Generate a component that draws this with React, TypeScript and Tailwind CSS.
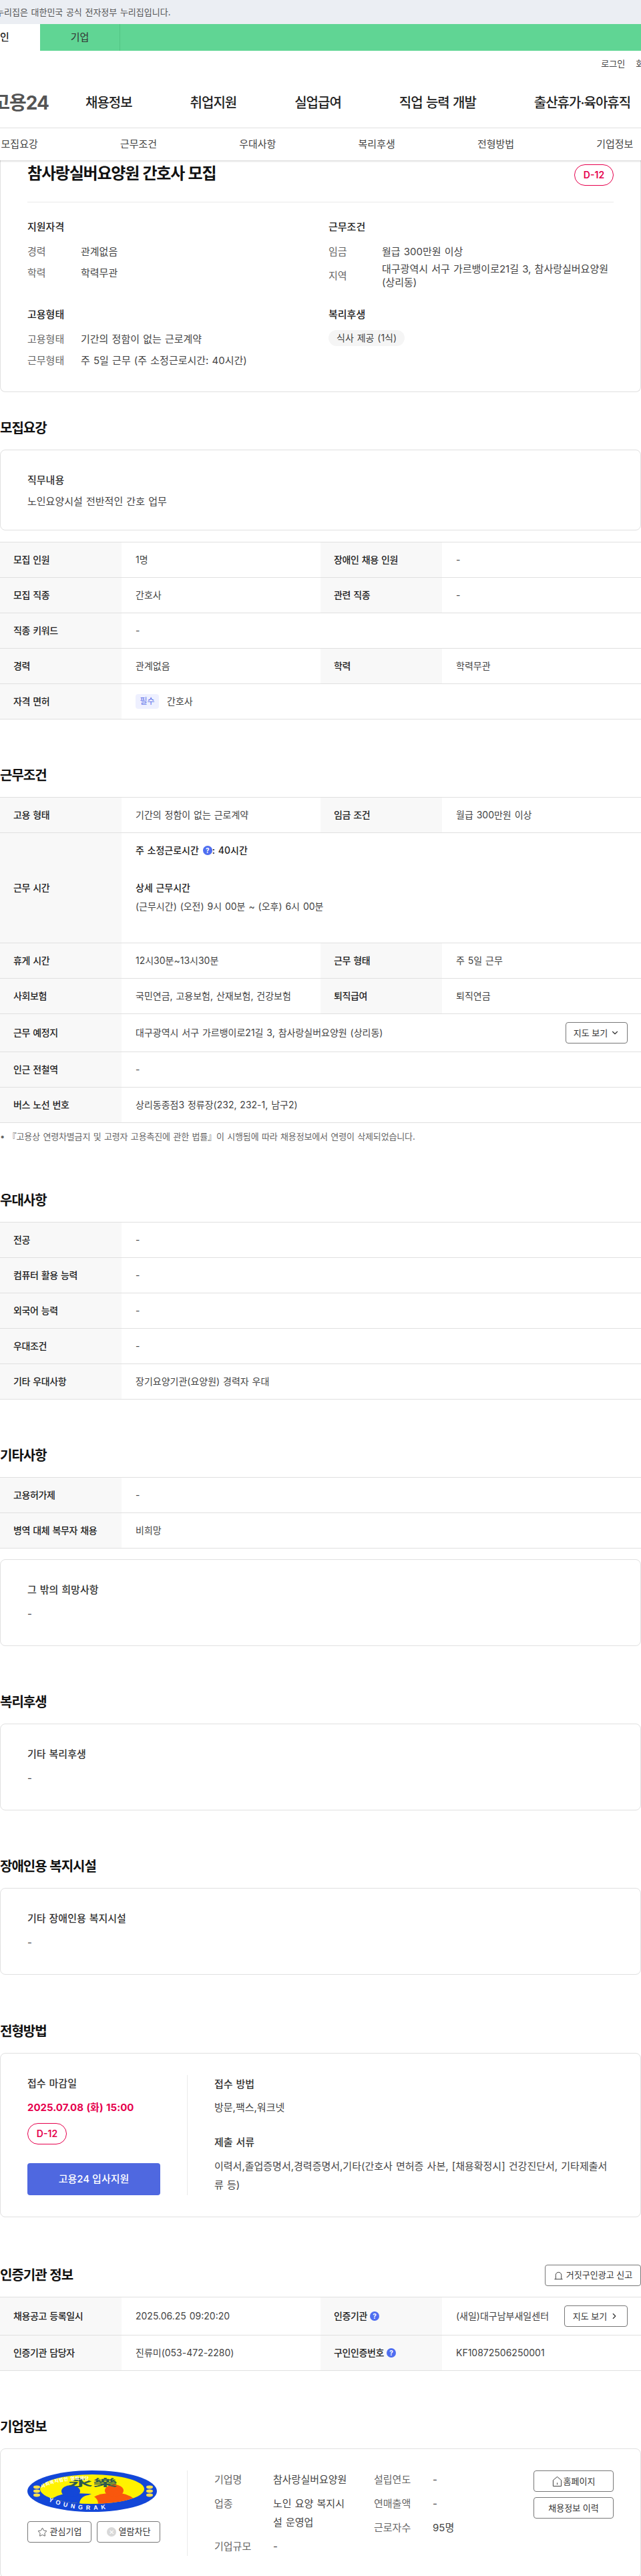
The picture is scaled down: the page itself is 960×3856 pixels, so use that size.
import type { ReactNode } from 'react';
import { ChevronDown, ChevronRight, Star } from 'lucide-react';

const NAV = ['채용정보', '취업지원', '실업급여', '직업 능력 개발', '출산휴가·육아휴직'];
const TABS = ['모집요강', '근무조건', '우대사항', '복리후생', '전형방법', '기업정보'];

function Help() {
  return (
    <span className="inline-flex h-[14px] w-[14px] shrink-0 items-center justify-center rounded-full bg-[#4f6ef0] text-[10px] font-bold leading-none text-white">
      ?
    </span>
  );
}

function Badge() {
  return (
    <span className="flex h-8 w-[59px] shrink-0 items-center justify-center rounded-2xl border border-[#e6004d] bg-white text-sm font-semibold text-[#e6004d]">
      D-12
    </span>
  );
}

function Heading({ children, className = '' }: { children: ReactNode; className?: string }) {
  return (
    <h2 className={`h-[30px] text-[20px] font-bold leading-[30px] tracking-[-1px] text-[#111] ${className}`}>
      {children}
    </h2>
  );
}

function Outline({ children, className = '' }: { children: ReactNode; className?: string }) {
  return (
    <button className={`flex h-8 items-center justify-center rounded border border-[#777] bg-white text-[13px] text-[#333] ${className}`}>
      {children}
    </button>
  );
}

interface RowProps {
  label: ReactNode;
  value: ReactNode;
  label2?: ReactNode;
  value2?: ReactNode;
  height?: string;
}

function Row({ label, value, label2, value2, height = 'h-[53px]' }: RowProps) {
  return (
    <div className={`flex border-b border-[#e0e0e0] ${height}`}>
      <div className="flex w-[182px] shrink-0 items-center gap-1 bg-[#f8f8f8] pl-5 font-medium tracking-[-0.4px] text-[#222]">
        {label}
      </div>
      {label2 ? (
        <>
          <div className="flex w-[298px] shrink-0 items-center pl-[21px] text-[#444]">{value}</div>
          <div className="flex w-[182px] shrink-0 items-center gap-1 bg-[#f8f8f8] pl-5 font-medium tracking-[-0.4px] text-[#222]">
            {label2}
          </div>
          <div className="flex min-w-0 flex-1 items-center pl-[21px] text-[#444]">{value2}</div>
        </>
      ) : (
        <div className="flex min-w-0 flex-1 items-center pl-[21px] text-[#444]">{value}</div>
      )}
    </div>
  );
}

function Table({ children }: { children: ReactNode }) {
  return <div className="border-t border-[#e0e0e0] text-sm">{children}</div>;
}

function TextCard({ title, value, className }: { title: string; value: string; className: string }) {
  return (
    <div className={`rounded-lg border border-[#e0e0e0] px-10 text-[15px] ${className}`}>
      <p className="h-6 font-medium leading-6 text-[#333]">{title}</p>
      <p className="leading-6 text-[#444]">{value}</p>
    </div>
  );
}

function SummaryRow({ label, children, height = 'h-8' }: { label: string; children: ReactNode; height?: string }) {
  return (
    <div className={`flex items-center ${height}`}>
      <span className="w-20 shrink-0 text-[#666]">{label}</span>
      <span className="leading-[20px] text-[#444]">{children}</span>
    </div>
  );
}

function Logo() {
  return (
    <svg viewBox="0 0 199 63" className="h-[63px] w-[199px]">
      <defs>
        <clipPath id="inner">
          <ellipse cx="97" cy="28" rx="78" ry="22" />
        </clipPath>
        <path id="arcTop" d="M22 27 Q60 3 170 24" fill="none" />
        <path id="arcBottom" d="M24 43 Q95 75 172 42" fill="none" />
      </defs>
      <ellipse cx="97" cy="31" rx="97" ry="31" fill="#1347d8" />
      <ellipse cx="97" cy="28" rx="78" ry="22" fill="#fff200" />
      <g clipPath="url(#inner)">
        <path d="M16 52 L39 41 Q50 34 70 34 L96 35 Q80 40 78 56 Z" fill="#1347d8" />
        <path d="M99 40 Q108 34 125 34 L140 34 Q155 36 165 48 L140 56 L107 56 Z" fill="#f9570d" />
        <ellipse cx="92" cy="50" rx="14" ry="13" fill="#fff200" />
      </g>
      <ellipse cx="65" cy="31" rx="14" ry="9" fill="#1347d8" />
      <ellipse cx="130" cy="30" rx="14" ry="9" fill="#f9570d" />
      {[25, 31, 37].map((cy) => (
        <g key={cy} fill="#ffe14d">
          <ellipse cx="14" cy={cy} rx="5" ry="2.4" />
          <ellipse cx="183" cy={cy} rx="5" ry="2.4" />
        </g>
      ))}
      <text x="98" y="23" textAnchor="middle" textLength="74" lengthAdjust="spacingAndGlyphs" fontSize="14" fontWeight="700" fill="#2d5a50">
        永樂
      </text>
      <text fontSize="7" fontWeight="700" fill="#fff" letterSpacing="0.5">
        <textPath href="#arcTop">사회복지법인 영락재단</textPath>
      </text>
      <text fontSize="9" fontWeight="700" fill="#fff" letterSpacing="5" fontFamily="'Liberation Sans', sans-serif">
        <textPath href="#arcBottom" startOffset="8">YOUNGRAK</textPath>
      </text>
    </svg>
  );
}

export default function App() {
  return (
    <div className="w-[960px] overflow-hidden bg-white font-['Inter','Noto_Sans_CJK_KR',sans-serif] text-[#222] [word-spacing:0.06em]">
      <div className="h-9 whitespace-nowrap bg-[#ebeef3] text-[13px] leading-9 text-[#555]">
        <span className="-ml-[6px]">누리집은 대한민국 공식 전자정부 누리집입니다.</span>
      </div>
      <div className="flex h-10 bg-[#60d594] text-[15px] leading-10">
        <div className="-ml-[60px] w-[120px] bg-white text-center font-medium">개인</div>
        <div className="w-[120px] border-r border-[#52c585] text-center text-[#333]">기업</div>
      </div>

      <div className="-mr-[40px] flex h-10 items-center justify-end gap-4 whitespace-nowrap text-[13px] text-[#444]">
        <span>로그인</span>
        <span>회원가입</span>
      </div>
      <div className="flex h-[76px] items-center whitespace-nowrap border-b border-[#eaeaea]">
        <span className="-ml-[60px] w-[188px] shrink-0 pr-[55px] text-right text-[28px] font-bold tracking-[-1px] text-[#555]">
          고용24
        </span>
        <nav className="flex gap-[87px] text-[20px] font-medium tracking-[-1px] text-[#222]">
          {NAV.map((n) => (
            <span key={n}>{n}</span>
          ))}
        </nav>
      </div>

      <div className="relative z-10 -ml-[60px] flex h-[48px] w-[1070px] items-center bg-white text-[15px] text-[#444] shadow-[0_1px_3px_rgba(0,0,0,0.2)]">
        {TABS.map((t) => (
          <span key={t} className="flex-1 text-center">
            {t}
          </span>
        ))}
      </div>

      <section className="rounded-b-lg border border-t-0 border-[#e0e0e0] px-10 pb-[30px] pt-1.5 text-[15px]">
        <div className="flex items-center justify-between border-b border-[#eaeaea] pb-6">
          <h1 className="-mt-1 text-[24px] font-bold tracking-[-1.2px] text-[#111]">참사랑실버요양원 간호사 모집</h1>
          <Badge />
        </div>
        <div className="mt-[25px] grid grid-cols-[451px_1fr] gap-y-[26px]">
          <div>
            <h3 className="mb-[9px] h-6 font-medium leading-6 text-[#222]">지원자격</h3>
            <SummaryRow label="경력">관계없음</SummaryRow>
            <SummaryRow label="학력">학력무관</SummaryRow>
          </div>
          <div>
            <h3 className="mb-[9px] h-6 font-medium leading-6 text-[#222]">근무조건</h3>
            <SummaryRow label="임금">월급 300만원 이상</SummaryRow>
            <SummaryRow label="지역" height="h-10">
              대구광역시 서구 가르뱅이로21길 3, 참사랑실버요양원 (상리동)
            </SummaryRow>
          </div>
          <div>
            <h3 className="mb-[9px] h-6 font-medium leading-6 text-[#222]">고용형태</h3>
            <SummaryRow label="고용형태">기간의 정함이 없는 근로계약</SummaryRow>
            <SummaryRow label="근무형태">주 5일 근무 (주 소정근로시간: 40시간)</SummaryRow>
          </div>
          <div>
            <h3 className="mb-[11px] h-6 font-medium leading-6 text-[#222]">복리후생</h3>
            <span className="inline-block h-6 rounded-full bg-[#f5f5f5] px-3 text-sm leading-6 text-[#444]">
              식사 제공 (1식)
            </span>
          </div>
        </div>
      </section>

      <Heading className="mt-[39px] mb-[17px]">모집요강</Heading>
      <TextCard title="직무내용" value="노인요양시설 전반적인 간호 업무" className="space-y-2 pb-[30px] pt-[33px]" />
      <div className="mt-[17px]">
        <Table>
          <Row label="모집 인원" value="1명" label2="장애인 채용 인원" value2="-" />
          <Row label="모집 직종" value="간호사" label2="관련 직종" value2="-" />
          <Row label="직종 키워드" value="-" />
          <Row label="경력" value="관계없음" label2="학력" value2="학력무관" />
          <Row
            label="자격 면허"
            value={
              <>
                <span className="mr-3 flex h-[22px] w-[35px] items-center justify-center rounded bg-[#eef0ff] text-xs text-[#5a6fe8]">
                  필수
                </span>
                간호사
              </>
            }
          />
        </Table>
      </div>

      <Heading className="mt-[69px] mb-[17px]">근무조건</Heading>
      <Table>
        <Row label="고용 형태" value="기간의 정함이 없는 근로계약" label2="임금 조건" value2="월급 300만원 이상" />
        <Row
          label="근무 시간"
          height="h-[165px]"
          value={
            <div className="self-start pt-[13px] leading-[26px]">
              <p className="flex items-center gap-1.5 font-medium text-[#222]">
                주 소정근로시간
                <Help />
                <span className="-ml-1.5">: 40시간</span>
              </p>
              <p className="mt-[30px] font-medium text-[#222]">상세 근무시간</p>
              <p className="mt-[2px]">(근무시간) (오전) 9시 00분 ~ (오후) 6시 00분</p>
            </div>
          }
        />
        <Row label="휴게 시간" value="12시30분~13시30분" label2="근무 형태" value2="주 5일 근무" />
        <Row label="사회보험" value="국민연금, 고용보험, 산재보험, 건강보험" label2="퇴직급여" value2="퇴직연금" />
        <Row
          label="근무 예정지"
          height="h-[57px]"
          value={
            <div className="flex w-full items-center justify-between pr-5">
              <span>대구광역시 서구 가르뱅이로21길 3, 참사랑실버요양원 (상리동)</span>
              <Outline className="w-[93px] gap-1">
                지도 보기
                <ChevronDown size={14} />
              </Outline>
            </div>
          }
        />
        <Row label="인근 전철역" value="-" />
        <Row label="버스 노선 번호" value="상리동종점3 정류장(232, 232-1, 남구2)" />
      </Table>
      <p className="mt-2.5 h-5 whitespace-nowrap text-[13px] leading-5 tracking-[-0.15px] text-[#666]">
        • 『고용상 연령차별금지 및 고령자 고용촉진에 관한 법률』이 시행됨에 따라 채용정보에서 연령이 삭제되었습니다.
      </p>

      <Heading className="mt-[71px] mb-[17px]">우대사항</Heading>
      <Table>
        <Row label="전공" value="-" />
        <Row label="컴퓨터 활용 능력" value="-" />
        <Row label="외국어 능력" value="-" />
        <Row label="우대조건" value="-" />
        <Row label="기타 우대사항" value="장기요양기관(요양원) 경력자 우대" />
      </Table>

      <Heading className="mt-[69px] mb-[17px]">기타사항</Heading>
      <Table>
        <Row label="고용허가제" value="-" />
        <Row label="병역 대체 복무자 채용" value="비희망" />
      </Table>
      <TextCard title="그 밖의 희망사항" value="-" className="mt-4 space-y-3 pb-[35px] pt-[33px]" />

      <Heading className="mt-[69px] mb-[17px]">복리후생</Heading>
      <TextCard title="기타 복리후생" value="-" className="space-y-3 pb-[35px] pt-[33px]" />

      <Heading className="mt-[69px] mb-[17px]">장애인용 복지시설</Heading>
      <TextCard title="기타 장애인용 복지시설" value="-" className="space-y-3 pb-[35px] pt-[33px]" />

      <Heading className="mt-[70px] mb-[17px]">전형방법</Heading>
      <section className="flex rounded-lg border border-[#e0e0e0] px-10 py-8 text-[15px]">
        <div className="w-[240px] shrink-0 border-r border-[#eaeaea] pr-10">
          <p className="h-[26px] font-medium leading-[26px] text-[#333]">접수 마감일</p>
          <p className="mt-[10px] h-[26px] text-[15px] font-bold leading-[26px] text-[#e6004d]">2025.07.08 (화) 15:00</p>
          <div className="mt-[10px]">
            <Badge />
          </div>
          <button className="mt-7 h-12 w-[199px] rounded bg-[#4f68e0] text-[15px] font-medium text-white">
            고용24 입사지원
          </button>
        </div>
        <div className="pl-10 leading-7">
          <p className="font-medium text-[#333]">접수 방법</p>
          <p className="mt-[7px] text-[#444]">방문,팩스,워크넷</p>
          <p className="mt-6 font-medium text-[#333]">제출 서류</p>
          <p className="mt-2 text-[#444]">
            이력서,졸업증명서,경력증명서,기타(간호사 면허증 사본, [채용확정시] 건강진단서, 기타제출서류 등)
          </p>
        </div>
      </section>

      <div className="mt-[71px] mb-4 flex h-8 items-center justify-between">
        <Heading>인증기관 정보</Heading>
        <Outline className="w-[144px] gap-1">
          <svg viewBox="0 0 16 16" className="h-[15px] w-[15px]" fill="none" stroke="#333" strokeWidth="1">
            <path d="M3.5 13.5V7a4.5 4.5 0 0 1 9 0v6.5M1.5 13.5h13" />
          </svg>
          거짓구인광고 신고
        </Outline>
      </div>
      <Table>
        <Row
          label="채용공고 등록일시"
          height="h-[57px]"
          value="2025.06.25 09:20:20"
          label2={
            <>
              인증기관
              <Help />
            </>
          }
          value2={
            <div className="flex w-full items-center justify-between pr-5">
              <span>(새일)대구남부새일센터</span>
              <Outline className="w-[95px] gap-1">
                지도 보기
                <ChevronRight size={14} />
              </Outline>
            </div>
          }
        />
        <Row
          label="인증기관 담당자"
          value="진류미(053-472-2280)"
          label2={
            <>
              구인인증번호
              <Help />
            </>
          }
          value2="KF10872506250001"
        />
      </Table>

      <Heading className="mt-[69px] mb-[17px]">기업정보</Heading>
      <section className="flex rounded-lg border border-[#e0e0e0] px-10 py-8 text-[15px]">
        <div className="w-[240px] shrink-0 border-r border-[#eaeaea] pr-10">
          <Logo />
          <div className="mt-[13px] flex gap-2">
            <Outline className="w-[96px] gap-1">
              <Star size={15} strokeWidth={1.25} />
              관심기업
            </Outline>
            <Outline className="w-[95px] gap-1">
              <span className="flex h-[14px] w-[14px] items-center justify-center rounded-full bg-[#d8d8d8] text-[10px] leading-none text-white">
                ✕
              </span>
              열람차단
            </Outline>
          </div>
        </div>
        <div className="flex min-w-0 flex-1 pl-10 leading-7 text-[#444]">
          <div className="w-[239px] shrink-0">
            <div className="flex">
              <span className="w-[88px] shrink-0 text-[#666]">기업명</span>
              참사랑실버요양원
            </div>
            <div className="mt-2 flex">
              <span className="w-[88px] shrink-0 text-[#666]">업종</span>
              <span className="w-[112px]">노인 요양 복지시설 운영업</span>
            </div>
            <div className="mt-2 flex">
              <span className="w-[88px] shrink-0 text-[#666]">기업규모</span>-
            </div>
          </div>
          <div>
            <div className="flex">
              <span className="w-[88px] text-[#666]">설립연도</span>-
            </div>
            <div className="mt-2 flex">
              <span className="w-[88px] text-[#666]">연매출액</span>-
            </div>
            <div className="mt-2 flex">
              <span className="w-[88px] text-[#666]">근로자수</span>95명
            </div>
          </div>
          <div className="ml-auto flex flex-col gap-2">
            <Outline className="w-[120px] gap-0.5">
              <svg viewBox="0 0 16 18" className="h-[17px] w-[15px]" fill="none" stroke="#333" strokeWidth="1">
                <path d="M1.5 7 8 1.5 14.5 7v9.5h-13zM8 11v3" />
              </svg>
              홈페이지
            </Outline>
            <Outline className="w-[120px]">채용정보 이력</Outline>
          </div>
        </div>
      </section>
    </div>
  );
}
